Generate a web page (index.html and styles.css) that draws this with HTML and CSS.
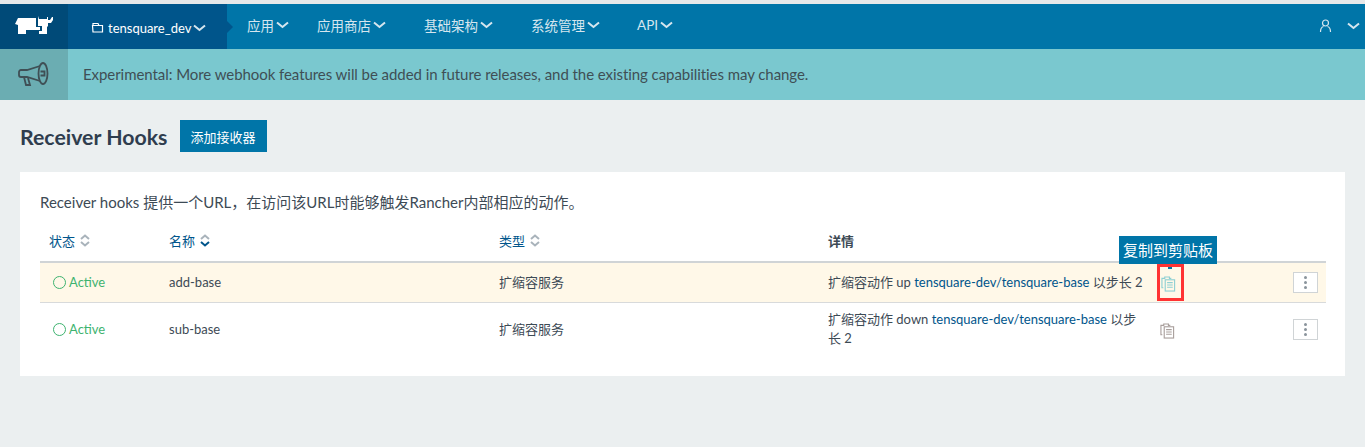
FILE: index.html
```html
<!DOCTYPE html>
<html lang="zh">
<head>
    <meta charset="UTF-8">
    <meta name="viewport" content="width=device-width, initial-scale=1.0">
    <title>Receiver Hooks</title>
    <link rel="stylesheet" href="styles.css">
</head>
<body>
    <header class="topbar">
        <div class="logo">
            <svg width="39" height="20" viewBox="0 0 39 20"><path fill="#fff" d="M3 3H21V12H25V15H11V19H3V10L0 9Z"/><path fill="#fff" d="M23 1l1 3h8v-2h1v3h2l2-3h1v3l-2 3h-3v3l-1 1v7h-8v-3h3v-5h-4z"/></svg>
        </div>
        <div class="env">
            <svg class="folder" width="13" height="11" viewBox="0 0 13 11"><path fill="none" stroke="#fff" stroke-width="1.2" d="M1.500 3.500h10v6.500h-9.500zM2 3.500v-2h5l1 2"/></svg>
            <span>tensquare_dev</span>
            <svg class="chev" width="13" height="8" viewBox="0 0 13 8"><path d="M1 1.500l5.500 4.500 5.500-4.500"/></svg>
        </div>
        <nav class="menu">
            <a class="short">应用<svg class="chev" width="13" height="8" viewBox="0 0 13 8"><path d="M1 1.500l5.500 4.500 5.500-4.500"/></svg></a>
            <a>应用商店<svg class="chev" width="13" height="8" viewBox="0 0 13 8"><path d="M1 1.500l5.500 4.500 5.500-4.500"/></svg></a>
            <a>基础架构<svg class="chev" width="13" height="8" viewBox="0 0 13 8"><path d="M1 1.500l5.500 4.500 5.500-4.500"/></svg></a>
            <a class="mid">系统管理<svg class="chev" width="13" height="8" viewBox="0 0 13 8"><path d="M1 1.500l5.500 4.500 5.500-4.500"/></svg></a>
            <a>API<svg class="chev" width="13" height="8" viewBox="0 0 13 8"><path d="M1 1.500l5.500 4.500 5.500-4.500"/></svg></a>
        </nav>
        <div class="user">
            <svg width="13" height="14" viewBox="0 0 13 14"><circle cx="6.500" cy="4" r="3" fill="none" stroke="#d5e6ef" stroke-width="1.200"/><path fill="none" stroke="#d5e6ef" stroke-width="1.200" d="M1.500 13c0-3 1-5 3-5.500M11.500 13c0-3-1-5-3-5.500"/></svg>
            <svg class="chev" width="13" height="8" viewBox="0 0 13 8"><path d="M1 1.500l5.500 4.500 5.500-4.500"/></svg>
        </div>
    </header>

    <div class="notice">
        <div class="notice-icon">
            <svg width="32" height="26" viewBox="0 0 32 26"><g fill="none" stroke="#3f4f55" stroke-width="1.800"><path d="M22 4L9 8H3a2 2 0 0 0-2 2v3a2 2 0 0 0 2 2h6l13 4"/><ellipse cx="25" cy="11.500" rx="4.500" ry="10.500"/><path d="M22.500 9.500h4v4h-4"/><path d="M6 15l2 8h4l-2-7"/></g></svg>
        </div>
        <p>Experimental: More webhook features will be added in future releases, and the existing capabilities may change.</p>
    </div>

    <main class="content">
        <div class="page-head">
            <h1>Receiver Hooks</h1>
            <button class="btn-add">添加接收器</button>
        </div>

        <section class="card">
            <p class="intro">Receiver hooks 提供一个URL，在访问该URL时能够触发Rancher内部相应的动作。</p>
            <table class="hooks">
                <thead>
                    <tr>
                        <th class="col-state"><a>状态<svg class="sort" width="10" height="13" viewBox="0 0 10 13"><path d="M1 5l4-3.500 4 3.500M1 8l4 3.500 4-3.500"/></svg></a></th>
                        <th class="col-name"><a>名称<svg class="sort" width="10" height="13" viewBox="0 0 10 13"><path d="M1 5l4-3.500 4 3.500"/><path class="down" d="M1 8l4 3.500 4-3.500"/></svg></a></th>
                        <th class="col-type"><a>类型<svg class="sort" width="10" height="13" viewBox="0 0 10 13"><path d="M1 5l4-3.500 4 3.500M1 8l4 3.500 4-3.500"/></svg></a></th>
                        <th class="col-detail">详情</th>
                        <th class="col-copy"></th>
                        <th class="col-menu"></th>
                    </tr>
                </thead>
                <tbody>
                    <tr class="hover">
                        <td><span class="state"><i class="ring"></i>Active</span></td>
                        <td>add-base</td>
                        <td>扩缩容服务</td>
                        <td class="detail">扩缩容动作 up <a>tensquare-dev/tensquare-base</a> 以步长 2</td>
                        <td class="copy-cell">
                            <span class="tip">复制到剪贴板</span>
                            <span class="mark">
                                <svg class="clip on" width="15" height="16" viewBox="0 0 16 17"><path d="M2.500 12.500h-1.500v-10h3v-1.500h5v1.500h2"/><rect x="4.500" y="4" width="10" height="12"/><path d="M6.500 7h6M6.500 9.500h6M6.500 12h6"/></svg>
                            </span>
                        </td>
                        <td class="menu-cell"><button class="dots"><i></i><i></i><i></i></button></td>
                    </tr>
                    <tr>
                        <td><span class="state"><i class="ring"></i>Active</span></td>
                        <td>sub-base</td>
                        <td>扩缩容服务</td>
                        <td class="detail">扩缩容动作 down <a>tensquare-dev/tensquare-base</a> 以步长 2</td>
                        <td class="copy-cell">
                            <svg class="clip" width="15" height="16" viewBox="0 0 16 17"><path d="M2.500 12.500h-1.500v-10h3v-1.500h5v1.500h2"/><rect x="4.500" y="4" width="10" height="12"/><path d="M6.500 7h6M6.500 9.500h6M6.500 12h6"/></svg>
                        </td>
                        <td class="menu-cell"><button class="dots"><i></i><i></i><i></i></button></td>
                    </tr>
                </tbody>
            </table>
        </section>
    </main>
</body>
</html>
```

FILE: styles.css
```css
* {
    margin: 0;
    padding: 0;
    box-sizing: border-box;
}
html, body {
    height: 100%;
    overflow: hidden;
}
body {
    background: #ebeff0;
    color: #3d4a55;
    font-family: Lato, "Noto Sans CJK SC", sans-serif;
    font-size: 13px;
    border-top: 4px solid #e6e8e9;
}

/* top navigation */
.topbar {
    display: flex;
    align-items: stretch;
    height: 45px;
    background: #0075a8;
    color: #d5e6ef;
}
.logo {
    width: 68px;
    background: #004a78;
    display: flex;
    align-items: center;
    justify-content: center;
    padding-bottom: 3px;
}
.env {
    width: 159px;
    background: #00558b;
    color: #fff;
    display: flex;
    align-items: center;
    padding-left: 23px;
    padding-top: 2px;
    position: relative;
}
.env::after {
    content: "";
    position: absolute;
    right: -6px;
    top: 17px;
    border-left: 6px solid #00558b;
    border-top: 6px solid transparent;
    border-bottom: 6px solid transparent;
}
.folder {
    margin-right: 4px;
}
.chev {
    fill: none;
    stroke: #d5e6ef;
    stroke-width: 2;
    margin-left: 2px;
}
.menu {
    display: flex;
    align-items: center;
    padding-left: 20px;
    font-size: 13.500px;
}
.menu a {
    display: flex;
    align-items: center;
    width: 107px;
    padding-bottom: 4px;
}
.menu a.short {
    width: 70px;
}
.menu a.mid {
    width: 106px;
}
.user {
    margin-left: auto;
    display: flex;
    align-items: center;
    gap: 13px;
    padding-right: 5px;
    padding-bottom: 1px;
}

/* notice */
.notice {
    display: flex;
    height: 51px;
    background: #7ac8cf;
    font-size: 15px;
    letter-spacing: -0.06px;
    color: #3f4f55;
}
.notice-icon {
    width: 68px;
    background: #6badb2;
    display: flex;
    align-items: center;
    justify-content: center;
}
.notice p {
    align-self: center;
    padding: 0 0 1px 15px;
}

/* page */
.content {
    padding: 20px 20px 0;
}
.page-head {
    display: flex;
    align-items: center;
    height: 32px;
    margin-bottom: 20px;
}
h1 {
    font-size: 21.300px;
    font-weight: 700;
    color: #2f3d4e;
    margin-right: 13px;
    padding-top: 2px;
}
.btn-add {
    width: 87px;
    height: 32px;
    border: none;
    padding-right: 2px;
    background: #0075a8;
    color: #fff;
    font-family: inherit;
    font-size: 13px;
}
.card {
    background: #fff;
    height: 204px;
    padding: 20px 19px 0 20px;
}
.intro {
    font-size: 15px;
    line-height: 20px;
    margin-bottom: 11px;
}

/* table */
.hooks {
    width: 100%;
    border-collapse: collapse;
    table-layout: fixed;
}
.hooks th {
    height: 39px;
    font-weight: 400;
    text-align: left;
    padding: 0 0 3px 9px;
    border-bottom: 2px solid #d0d4d6;
    color: #00558b;
}
.hooks th a {
    display: inline-flex;
    align-items: center;
    gap: 5px;
}
.hooks .col-detail {
    color: #3d4a55;
    font-weight: 700;
}
.col-state { width: 120px; }
.col-name { width: 330px; }
.col-type { width: 329px; }
.col-detail { width: 329px; }
.col-copy { width: 130px; }
.sort {
    fill: none;
    stroke: #a9b3bb;
    stroke-width: 2;
}
.sort .down {
    stroke: #00558b;
}
.hooks td {
    height: 40px;
    padding: 0 9px;
    border-bottom: 1px solid #d8dadb;
    line-height: 19px;
    vertical-align: middle;
}
.hooks td.detail {
    padding-right: 5px;
}
.hooks tbody tr:last-child td {
    border-bottom: none;
    height: 54px;
}
.hover td {
    background: #fff8e8;
}
.hooks td a {
    color: #00558b;
}
.state {
    display: inline-flex;
    align-items: center;
    color: #3eb370;
    padding: 3px 0 0 4px;
}
.ring {
    width: 13px;
    height: 13px;
    border: 1px solid #3eb370;
    border-radius: 50%;
    margin-right: 3px;
}
.copy-cell {
    position: relative;
}
.clip {
    fill: none;
    stroke: #a99f9c;
    stroke-width: 1.200;
    display: block;
    margin: 3px 0 0 3px;
}
.clip.on {
    stroke: #8fd0d3;
    margin: 2px 4px 0 0;
}
.mark {
    position: absolute;
    left: 9px;
    top: 1px;
    width: 27px;
    height: 37px;
    border: 3px solid #f33;
    display: flex;
    align-items: center;
    justify-content: center;
}
/* little tip arrow that shows inside the red box */
.mark::before {
    content: "";
    position: absolute;
    left: 8px;
    top: 0;
    width: 4px;
    height: 2px;
    background: #0075a8;
}
.tip {
    position: absolute;
    left: -29px;
    top: -27px;
    width: 98px;
    height: 28px;
    background: #0075a8;
    color: #fff;
    font-size: 15px;
    line-height: 28px;
    text-align: center;
    white-space: nowrap;
}
.menu-cell {
    text-align: right;
}
.hooks td.menu-cell {
    padding-right: 8px;
}
.dots {
    width: 25px;
    height: 21px;
    background: #fff;
    border: 1px solid #d0d4d6;
    display: inline-flex;
    flex-direction: column;
    align-items: center;
    justify-content: center;
    gap: 2px;
    vertical-align: middle;
}
.dots i {
    width: 3px;
    height: 3px;
    border-radius: 50%;
    background: #8a949c;
}
```
